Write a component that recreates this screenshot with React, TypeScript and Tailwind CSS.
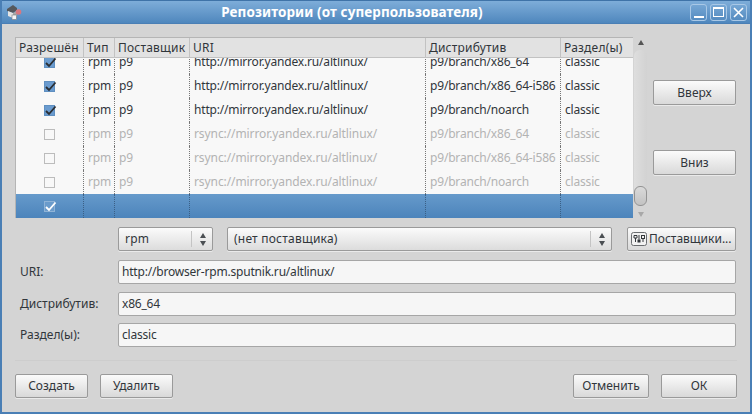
import React from "react";

const cols = ["w-[68px]", "w-[31px]", "w-[75px]", "w-[236px]", "w-[135px]", "flex-1"];
const heads = ["Разрешён", "Тип", "Поставщик", "URI", "Дистрибутив", "Раздел(ы)"];
const rows = [
  ["http://mirror.yandex.ru/altlinux/", "p9/branch/x86_64", true],
  ["http://mirror.yandex.ru/altlinux/", "p9/branch/x86_64-i586", true],
  ["http://mirror.yandex.ru/altlinux/", "p9/branch/noarch", true],
  ["rsync://mirror.yandex.ru/altlinux/", "p9/branch/x86_64", false],
  ["rsync://mirror.yandex.ru/altlinux/", "p9/branch/x86_64-i586", false],
  ["rsync://mirror.yandex.ru/altlinux/", "p9/branch/noarch", false],
] as [string, string, boolean][];

function Check({ on, sel }: { on: boolean; sel?: boolean }) {
  const box = sel
    ? "border-[#8fb3d6] bg-[#6a9bcb]"
    : on
    ? "border-[#5f8fc0] bg-[#6a9bcf]"
    : "border-[#bcbcbc] bg-[#f8f8f8]";
  return (
    <div className={`w-[11px] h-[11px] border ${box} relative`}>
      {on && (
        <svg viewBox="0 0 13 13" className="absolute left-[-1px] top-[-2px] w-[13px] h-[13px]">
          <path d="M2 7 L5 10 L11.5 2.5" fill="none" stroke={sel ? "#ffffff" : "#2b2f33"} strokeWidth="1.8" />
        </svg>
      )}
    </div>
  );
}

function Row({ cells, on, gray }: { cells: string[]; on: boolean; gray: boolean }) {
  return (
    <div className={`flex h-6 items-center tracking-[-0.18px] ${gray ? "text-[#b3b3b3]" : "text-[#31363b]"}`}>
      <div className={`${cols[0]} h-full flex items-center justify-center border-r border-dotted border-[#777]`}>
        <Check on={on} />
      </div>
      {cells.map((c, i) => (
        <div
          key={i}
          className={`${cols[i + 1]} h-full flex items-center pl-[4px] whitespace-nowrap overflow-hidden ${i < 4 ? "border-r border-dotted border-[#777]" : ""} ${i === 2 && gray ? "tracking-[-0.09px]" : ""}`}
        >
          {c}
        </div>
      ))}
    </div>
  );
}

function Btn({ w, children }: { w: string; children: React.ReactNode }) {
  return (
    <button className={`${w} h-6 rounded-[2px] border border-[#9a9a9a] bg-gradient-to-b from-[#fbfbfb] to-[#d9d9d9] text-[#31363b] flex items-center justify-center shadow-[0_1px_0_#eaeaea]`}>
      {children}
    </button>
  );
}

function Arrows() {
  return (
    <div className="flex flex-col items-center gap-[3px] w-[20px] pl-px">
      <div className="w-0 h-0 border-l-[3.5px] border-r-[3.5px] border-b-[5px] border-l-transparent border-r-transparent border-b-[#4b4f53]" />
      <div className="w-0 h-0 border-l-[3.5px] border-r-[3.5px] border-t-[5px] border-l-transparent border-r-transparent border-t-[#4b4f53]" />
    </div>
  );
}

function Combo({ w, text }: { w: string; text: string }) {
  return (
    <div className={`${w} h-6 rounded-[2px] border border-[#9a9a9a] bg-gradient-to-b from-[#fbfbfb] to-[#dcdcdc] flex items-center pl-[6px] shadow-[0_1px_0_#eaeaea]`}>
      <span className="flex-1 truncate tracking-[0.22px]">{text}</span>
      <div className="w-px h-[16px] bg-[#c4c4c4]" />
      <Arrows />
    </div>
  );
}

function Field({ label, value }: { label: string; value: string }) {
  return (
    <div className="flex items-center h-6">
      <div className="w-[103px] pl-[5px]">{label}</div>
      <div className="flex-1 h-6 rounded-[2px] border border-[#a6a6a6] bg-[#f6f6f6] flex items-center pl-[3px] tracking-[-0.2px]">{value}</div>
    </div>
  );
}

export default function App() {
  return (
    <div
      className="w-[752px] h-[414px] overflow-hidden flex flex-col bg-[#d4d4d4] border-2 border-t-0 border-[#4a7fb5] text-[12px] leading-[16px] text-[#31363b]"
      style={{ fontFamily: '"Noto Sans", sans-serif' }}
    >
      {/* title bar */}
      <div className="h-6 -mx-[2px] shrink-0 flex items-center border-t border-[#3f73a8] border-b border-b-[#4a7fb5] bg-gradient-to-b from-[#7eadd9] to-[#4f87bd] pl-[6px] pr-[5px]">
        <svg viewBox="0 0 16 16" className="w-[16px] h-[16px] shrink-0">
          <path d="M1 5 L7 1 L11 4 L11 6 L7 9 L1 7 Z" fill="#55585c" />
          <path d="M2 7 L7 9 L7 14 L2 12 Z" fill="#e4e4e4" />
          <path d="M7 9 L11 7 L11 12 L7 14 Z" fill="#a9a9a9" />
          <circle cx="12.5" cy="8" r="2.8" fill="#d9777f" />
          <rect x="6" y="11" width="4.5" height="4.5" fill="#f6f6f6" stroke="#77797c" strokeWidth="0.6" />
        </svg>
        <div className="flex-1 text-center text-white font-bold text-[13.5px] tracking-[0.09px] pb-[1px] pr-[8px]">Репозитории (от суперпользователя)</div>
        <div className="flex gap-[3px]">
          <div className="w-[17px] h-[17px] rounded-[3px] border border-[#a9c8e6] flex items-end justify-center pb-[2px]">
            <div className="w-[10px] h-[2px] bg-white" />
          </div>
          <div className="w-[17px] h-[17px] rounded-[3px] border border-[#a9c8e6] flex items-center justify-center">
            <div className="w-[11px] h-[10px] border border-white border-t-[2px]" />
          </div>
          <div className="w-[17px] h-[17px] rounded-[3px] border border-[#a9c8e6] flex items-center justify-center">
            <svg viewBox="0 0 11 11" className="w-[11px] h-[11px]">
              <path d="M1 1 L10 10 M10 1 L1 10" stroke="#fff" strokeWidth="1.6" />
            </svg>
          </div>
        </div>
      </div>

      <div className="flex-1 flex flex-col pl-[13px] pr-[13px] pt-[13px]">
        {/* table + side */}
        <div className="flex h-[181px]">
          <div className="w-[618px] shrink-0 flex flex-col border-l border-t border-[#b5b5b5] overflow-hidden bg-[#f8f8f8]">
            <div className="h-[20px] shrink-0 flex items-center bg-[#e2e2e2] border-b border-[#c2c2c2] tracking-[0.2px]">
              {heads.map((h, i) => (
                <div key={h} className={`${cols[i]} h-full flex items-center pl-[3px] whitespace-nowrap overflow-hidden ${i < 5 ? "border-r border-[#c2c2c2]" : ""}`}>
                  {h}
                </div>
              ))}
            </div>
            <div className="flex-1 overflow-hidden">
              <div className="-mt-[8px]">
                {rows.map((r) => (
                  <Row key={r[0] + r[1]} cells={["rpm", "p9", r[0], r[1], "classic"]} on={r[2]} gray={!r[2]} />
                ))}
                <div className="flex h-6 bg-gradient-to-b from-[#669acb] to-[#4c84bb]">
                  <div className={`${cols[0]} h-full flex items-center justify-center border-r border-dotted border-[#3a5f85]`}>
                    <Check on sel />
                  </div>
                  {[1, 2, 3, 4, 5].map((i) => (
                    <div key={i} className={`${cols[i]} h-full ${i < 5 ? "border-r border-dotted border-[#3a5f85]" : ""}`} />
                  ))}
                </div>
              </div>
            </div>
          </div>
          {/* scrollbar */}
          <div className="w-[14px] flex flex-col items-center pt-[3px]">
            <div className="w-0 h-0 border-l-[3px] border-r-[3px] border-b-[5px] border-l-transparent border-r-transparent border-b-[#555] ml-[1px]" />
            <div className="w-[13px] flex-1 mt-[5px] mb-[6px] rounded-[6px] bg-gradient-to-r from-[#dedede] to-[#d2d2d2] flex flex-col justify-end">
              <div className="w-[13px] h-[20px] rounded-[6px] border border-[#939393] bg-gradient-to-b from-[#dadada] to-[#c2c2c2]" />
            </div>
            <div className="w-0 h-0 border-l-[3px] border-r-[3px] border-t-[5px] border-l-transparent border-r-transparent border-t-[#a8a8a8] mb-[1px] ml-[1px]" />
          </div>
          <div className="flex-1 flex flex-col items-end pt-[43px] gap-[45px] pr-[1px]">
            <Btn w="w-[83px] !h-[25px]">Вверх</Btn>
            <Btn w="w-[83px] !h-[25px]">Вниз</Btn>
          </div>
        </div>

        {/* combos */}
        <div className="flex items-center mt-[9px] pl-[103px]">
          <Combo w="w-[95px]" text="rpm" />
          <div className="w-[14px]" />
          <Combo w="w-[385px]" text="(нет поставщика)" />
          <div className="w-[15px]" />
          <button className="w-[109px] h-6 rounded-[2px] border border-[#9a9a9a] bg-gradient-to-b from-[#fbfbfb] to-[#d9d9d9] flex items-center pl-[3px] shadow-[0_1px_0_#eaeaea]">
            <svg viewBox="0 0 16 16" className="w-[16px] h-[16px] shrink-0 mr-[2px]">
              <rect x="0.5" y="1.5" width="15" height="13" rx="2" fill="#f2f2f2" stroke="#6a6d70" />
              <path d="M3 4.5 H6 M3 4.5 V7 H6 V4.5 M4.5 7 V11" fill="none" stroke="#33373b" />
              <rect x="6.5" y="8.5" width="3" height="3" fill="#33373b" />
              <path d="M8 4 V8.5" stroke="#33373b" />
              <rect x="10.5" y="4.5" width="3" height="3" fill="none" stroke="#33373b" />
              <path d="M12 7.5 V11" stroke="#33373b" />
            </svg>
            <span className="whitespace-nowrap">Поставщики...</span>
          </button>
        </div>

        <div className="flex flex-col mt-[9px] pr-[1px]">
          <Field label="URI:" value="http://browser-rpm.sputnik.ru/altlinux/" />
          <div className="h-[8px]" />
          <Field label="Дистрибутив:" value="x86_64" />
          <div className="h-[7px]" />
          <Field label="Раздел(ы):" value="classic" />
        </div>

        <div className="h-px bg-[#cdcdcd] mt-[13px]" />

        <div className="flex items-center mt-[13px]">
          <Btn w="w-[73px]">Создать</Btn>
          <div className="w-[12px]" />
          <Btn w="w-[73px]">Удалить</Btn>
          <div className="flex-1" />
          <Btn w="w-[76px]">Отменить</Btn>
          <div className="w-[12px]" />
          <Btn w="w-[76px]">ОК</Btn>
        </div>
      </div>
    </div>
  );
}
